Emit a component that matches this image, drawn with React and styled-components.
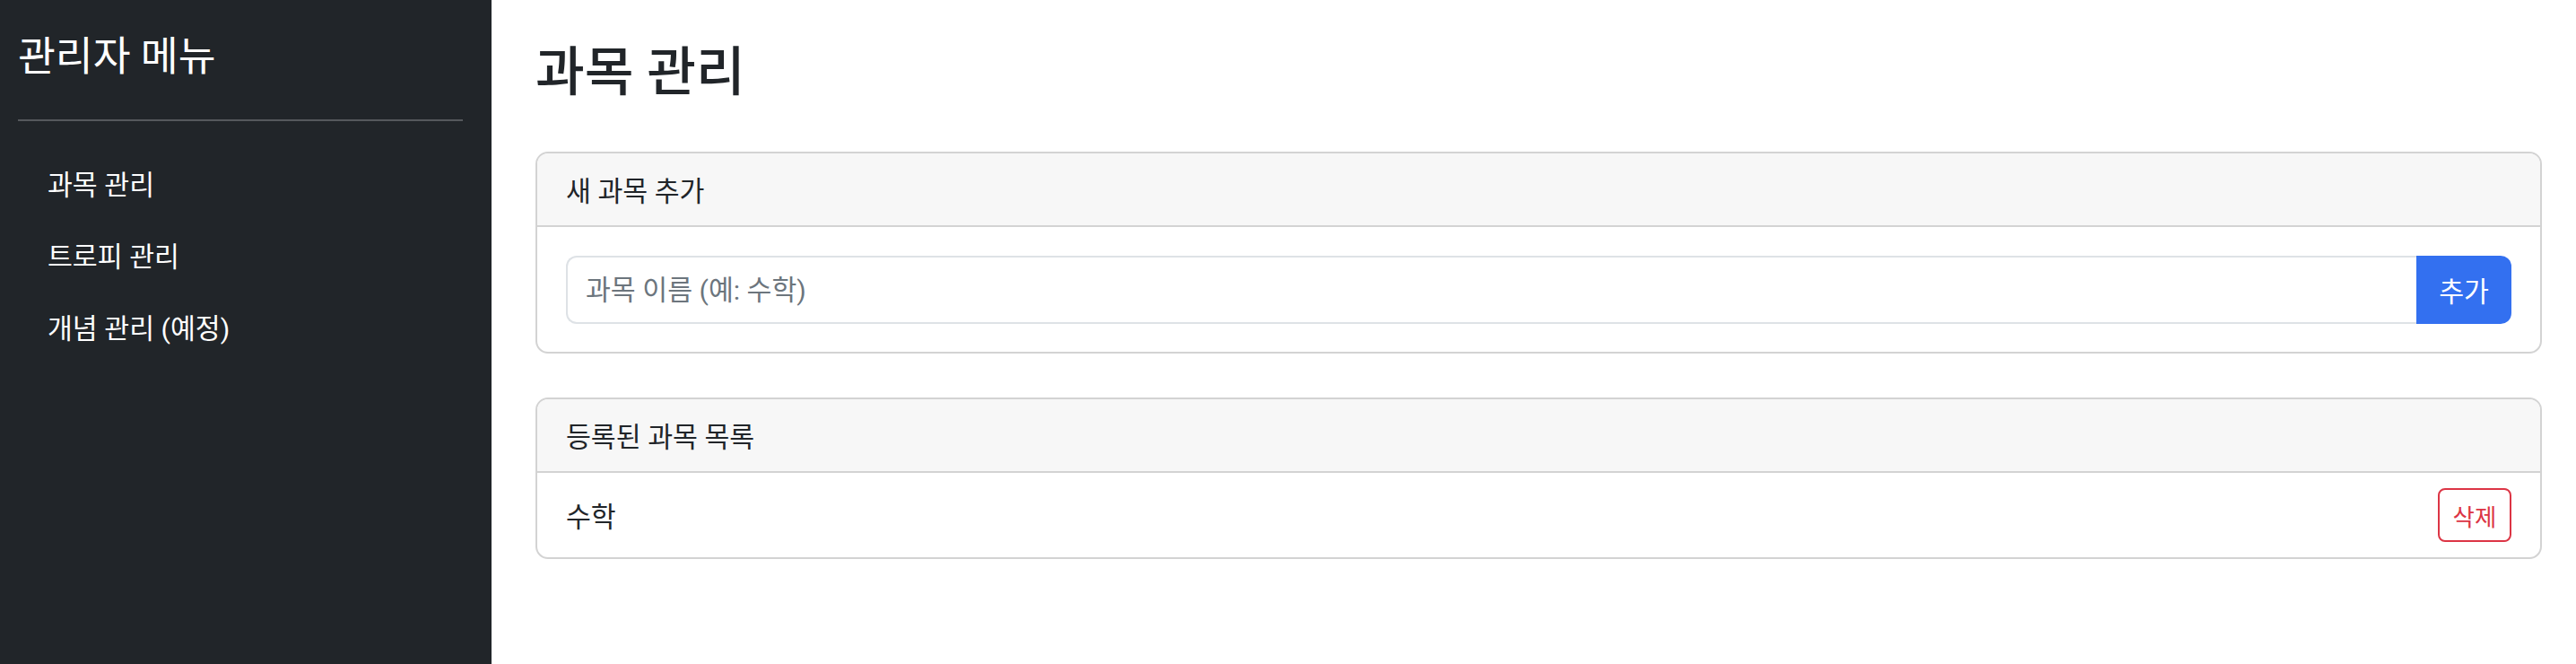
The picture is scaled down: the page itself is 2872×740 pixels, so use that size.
import React from "react";
import styled, { createGlobalStyle } from "styled-components";

const GlobalStyle = createGlobalStyle`
  body {
    margin: 0;
    font-family: Roboto, "Noto Sans CJK KR", sans-serif;
    color: #212529;
    background: #fff;
  }
  * {
    box-sizing: border-box;
  }
`;

const subjects = ["수학"];
const menu = ["과목 관리", "트로피 관리", "개념 관리 (예정)"];

export default function App() {
  return (
    <>
      <GlobalStyle />
      <Layout>
        <Sidebar>
          <SideTitle>관리자 메뉴</SideTitle>
          <Divider />
          <Nav>
            {menu.map((item) => (
              <NavItem key={item}>{item}</NavItem>
            ))}
          </Nav>
        </Sidebar>
        <Main>
          <PageTitle>과목 관리</PageTitle>
          <Card>
            <CardHeader>새 과목 추가</CardHeader>
            <CardBody>
              <InputGroup>
                <Input placeholder="과목 이름 (예: 수학)" />
                <AddButton>추가</AddButton>
              </InputGroup>
            </CardBody>
          </Card>
          <Card>
            <CardHeader>등록된 과목 목록</CardHeader>
            {subjects.map((s) => (
              <ListItem key={s}>
                <span>{s}</span>
                <DeleteButton>삭제</DeleteButton>
              </ListItem>
            ))}
          </Card>
        </Main>
      </Layout>
    </>
  );
}

const Layout = styled.div`
  display: flex;
  min-height: 100vh;
`;

const Sidebar = styled.aside`
  width: 548px;
  flex-shrink: 0;
  background: #212529;
  color: #fff;
  padding: 37px 32px 20px 20px;
`;

const SideTitle = styled.h4`
  margin: 0;
  font-size: 45.5px;
  font-weight: 400;
  line-height: 1.2;
`;

const Divider = styled.div`
  height: 2px;
  background: #55585c;
  margin: 41px 0 32px;
`;

const Nav = styled.nav`
  display: flex;
  flex-direction: column;
`;

const NavItem = styled.a`
  display: block;
  color: #fff;
  font-size: 30.3px;
  line-height: 44px;
  padding: 18px 33px;
  text-decoration: none;
  cursor: pointer;
`;

const Main = styled.main`
  flex: 1;
  padding: 46px 38px 0 49px;
`;

const PageTitle = styled.h2`
  margin: 0 0 53px;
  font-size: 59.5px;
  font-weight: 500;
  line-height: 70px;
`;

const Card = styled.section`
  border: 2px solid #d3d3d3;
  border-radius: 14px;
  overflow: hidden;
  margin-bottom: 49px;
  background: #fff;
`;

const CardHeader = styled.div`
  display: flex;
  align-items: center;
  height: 82px;
  padding: 0 32px;
  background: #f7f7f7;
  border-bottom: 2px solid #d3d3d3;
  font-size: 30.3px;
`;

const CardBody = styled.div`
  padding: 32px 32px 31px 32px;
`;

const InputGroup = styled.div`
  display: flex;
  height: 76px;
`;

const Input = styled.input`
  flex: 1;
  min-width: 0;
  border: 2px solid #dee2e6;
  border-right: none;
  border-radius: 12px 0 0 12px;
  padding: 0 20px;
  font-family: inherit;
  font-size: 30.3px;
  color: #212529;
  outline: none;
  &::placeholder {
    color: #6c757d;
  }
`;

const AddButton = styled.button`
  width: 106px;
  border: none;
  border-radius: 0 12px 12px 0;
  background: #3370f0;
  color: #fff;
  font-family: inherit;
  font-size: 30.3px;
  cursor: pointer;
`;

const ListItem = styled.div`
  display: flex;
  align-items: center;
  justify-content: space-between;
  height: 94px;
  padding: 0 32px;
  font-size: 30.3px;
`;

const DeleteButton = styled.button`
  width: 82px;
  height: 60px;
  border: 2px solid #dc3545;
  border-radius: 8px;
  background: #fff;
  color: #dc3545;
  font-family: inherit;
  font-size: 26.5px;
  cursor: pointer;
`;
